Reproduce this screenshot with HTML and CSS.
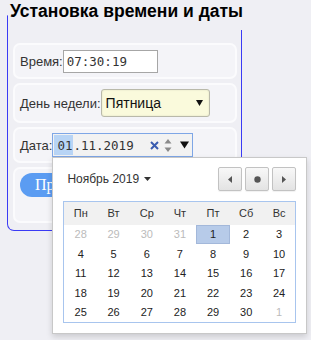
FILE: index.html
```html
<!DOCTYPE html>
<html lang="ru">
<head>
<meta charset="utf-8">
<link rel="stylesheet" href="styles.css">
</head>
<body>
<fieldset class="panel">
  <legend class="panel-title">Установка времени и даты</legend>
  <div class="rows">
    <div class="row row-time">
      <label class="lbl" for="t">Время:</label>
      <input id="t" class="time-input" type="text" value="07:30:19">
    </div>
    <div class="row row-day">
      <span class="lbl">День недели:</span>
      <div class="select">
        <span>Пятница</span>
        <svg class="sel-arrow" width="7" height="6" viewBox="0 0 7 6"><path d="M0 0H7L3.5 6Z" fill="#111"/></svg>
      </div>
    </div>
    <div class="row row-date">
      <span class="lbl">Дата:</span>
      <div class="date-field">
        <span class="date-text"><span class="seg-sel">01</span>.11.2019</span>
        <svg class="date-clear" width="9" height="9" viewBox="0 0 9 9"><path d="M1 1L8 8M8 1L1 8" stroke="#3a5cb0" stroke-width="2"/></svg>
        <svg class="date-spin" width="8" height="15" viewBox="0 0 8 15"><path d="M4 1L7.5 5.5H0.5Z M4 14L7.5 9.5H0.5Z" fill="#8a8a8a"/></svg>
        <svg class="date-drop" width="9" height="8" viewBox="0 0 9 8"><path d="M0 0.5H9L4.5 7.5Z" fill="#111"/></svg>
        <div class="picker">
          <div class="picker-head">
            <div class="month">Ноябрь 2019 <svg class="caret" width="7" height="4" viewBox="0 0 7 4"><path d="M0 0H7L3.5 4Z" fill="#333"/></svg></div>
            <div class="nav">
              <span class="nav-btn"><svg width="4" height="7" viewBox="0 0 4 7"><path d="M4 0V7L0 3.5Z" fill="#555"/></svg></span>
              <span class="nav-btn"><svg width="7" height="7" viewBox="0 0 7 7"><circle cx="3.5" cy="3.5" r="3.2" fill="#555"/></svg></span>
              <span class="nav-btn"><svg width="4" height="7" viewBox="0 0 4 7"><path d="M0 0V7L4 3.5Z" fill="#555"/></svg></span>
            </div>
          </div>
          <table class="cal">
            <thead>
              <tr><th>Пн</th><th>Вт</th><th>Ср</th><th>Чт</th><th>Пт</th><th>Сб</th><th>Вс</th></tr>
            </thead>
            <tbody>
              <tr><td class="other">28</td><td class="other">29</td><td class="other">30</td><td class="other">31</td><td class="sel">1</td><td>2</td><td>3</td></tr>
              <tr><td>4</td><td>5</td><td>6</td><td>7</td><td>8</td><td>9</td><td>10</td></tr>
              <tr><td>11</td><td>12</td><td>13</td><td>14</td><td>15</td><td>16</td><td>17</td></tr>
              <tr><td>18</td><td>19</td><td>20</td><td>21</td><td>22</td><td>23</td><td>24</td></tr>
              <tr><td>25</td><td>26</td><td>27</td><td>28</td><td>29</td><td>30</td><td class="other">1</td></tr>
            </tbody>
          </table>
        </div>
      </div>
    </div>
    <div class="row row-btn">
      <button class="apply" type="button">Применить</button>
    </div>
  </div>
</fieldset>
</body>
</html>
```
FILE: styles.css
```css
* { box-sizing: border-box; }
html, body { margin: 0; }
body {
  background: #efeff4;
  font-family: "Liberation Sans", Arial, sans-serif;
  color: #333;
  width: 311px;
  height: 340px;
  overflow: hidden;
}
.panel {
  margin: 0 0 0 7px;
  width: 235px;
  border: 1px solid #3b3bf5;
  border-top-color: transparent;
  border-radius: 0 0 0 7px;
  padding: 13px 4px 7px 5px;
  min-inline-size: 0;
}
.panel-title {
  margin-left: -3px;
  padding: 0 0 8px 0;
  font-size: 17.5px;
  line-height: 22px;
  font-weight: bold;
  color: #000;
  white-space: nowrap;
}
.rows {
  display: flex;
  flex-direction: column;
  gap: 4px;
}
.row {
  display: flex;
  align-items: center;
  background: #f4f4f8;
  border: 2px solid #fbfbfd;
  border-radius: 7px;
  padding: 0 5px;
}
.row-time { height: 36px; }
.row-day { height: 40px; }
.row-date { height: 36px; }
.row-btn { height: 56px; align-items: flex-start; padding-top: 4px; }
.lbl { font-size: 13px; color: #333; white-space: nowrap; }
.time-input {
  width: 95px;
  height: 23px;
  margin: 0;
  border: 1px solid #a6a6a6;
  border-radius: 0;
  background: #fff;
  padding: 0 0 0 3px;
  font: 12.5px "DejaVu Sans Mono", monospace;
  color: #333;
  outline: none;
}
.select {
  width: 109px;
  height: 28px;
  display: flex;
  align-items: center;
  justify-content: space-between;
  padding: 0 6px 0 4px;
  background: #fafadc;
  border: 1px solid #b9b9aa;
  border-radius: 3px;
  box-shadow: inset 0 0 2px rgba(0, 0, 0, 0.12);
  font-size: 14px;
  color: #111;
}
.date-field {
  position: relative;
  width: 141px;
  height: 24px;
  display: flex;
  align-items: center;
  border: 1px solid #7ea6e6;
  background: #f2f2f2;
  padding-left: 1px;
}
.date-text {
  align-self: stretch;
  display: flex;
  align-items: center;
  font: 12.5px "DejaVu Sans Mono", monospace;
  color: #333;
}
.seg-sel {
  align-self: stretch;
  display: flex;
  align-items: center;
  background: #b8d4f5;
  padding: 0 1px 0 3px;
  margin: 1px 0;
}
.date-clear { margin-left: 16px; }
.date-spin { margin-left: 5px; }
.date-drop { margin-left: 8px; }
.picker {
  position: absolute;
  left: -1px;
  top: calc(100% + 1px);
  width: 255px;
  background: #fff;
  border: 1px solid #c8c8c8;
  box-shadow: 0 3px 6px rgba(0, 0, 0, 0.15);
  padding: 9px 10px 10px;
  z-index: 5;
}
.picker-head {
  height: 24px;
  display: flex;
  align-items: center;
  justify-content: space-between;
  margin-bottom: 10px;
}
.month {
  padding-left: 4px;
  font-size: 12px;
  color: #333;
  display: flex;
  align-items: center;
}
.caret { margin-left: 5px; }
.nav { display: flex; gap: 3px; }
.nav-btn {
  width: 24px;
  height: 24px;
  display: flex;
  align-items: center;
  justify-content: center;
  background: linear-gradient(#f8f8f8, #e3e3e3);
  border: 1px solid #c2c2c2;
  border-radius: 2px;
  box-shadow: 0 1px 1px rgba(0, 0, 0, 0.06);
}
.cal {
  width: 233px;
  border-collapse: collapse;
  border: 1px solid #a8c5ee;
  table-layout: fixed;
  font-size: 11px;
}
.cal th {
  height: 23px;
  padding: 0;
  background: #f1f1f1;
  font-weight: normal;
  color: #333;
}
.cal td {
  height: 19.5px;
  padding: 0;
  text-align: center;
  color: #222;
}
.cal td.other { color: #bbb; }
.cal td.sel {
  background: #b7cbe9;
  box-shadow: inset 0 0 0 1px #a3b8da;
}
.apply {
  height: 24px;
  margin: 0;
  padding: 0 15px;
  border: none;
  border-radius: 12px;
  background: #5b9cf2;
  color: #fff;
  font: 16px "Liberation Serif", serif;
}
```
